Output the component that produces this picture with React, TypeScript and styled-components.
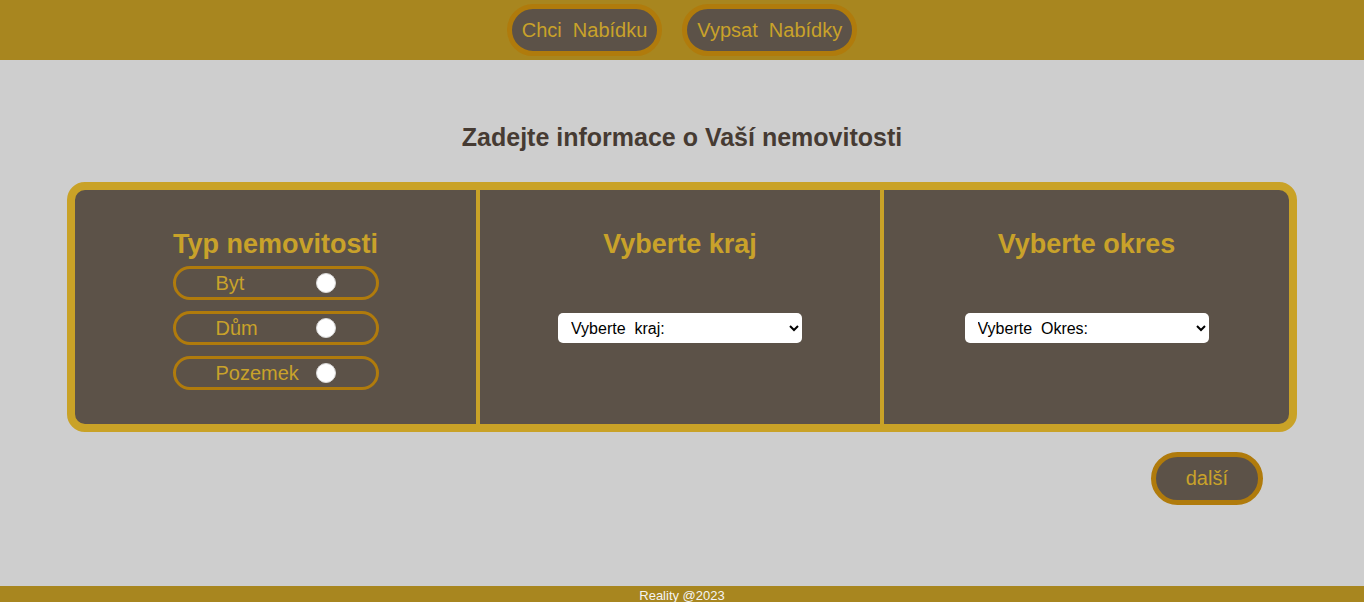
import React from "react";
import styled, { createGlobalStyle } from "styled-components";

const GlobalStyle = createGlobalStyle`
  html, body { margin: 0; padding: 0; }
  body {
    font-family: "Liberation Sans", Arial, sans-serif;
    background: #cecece;
  }
  #root {
    min-height: 100vh;
    display: flex;
    flex-direction: column;
  }
`;

const Header = styled.header`
  height: 60px;
  background: #a8861f;
  display: flex;
  justify-content: center;
  align-items: center;
  gap: 20px;
`;

const PillButton = styled.button<{ $tall?: boolean }>`
  box-sizing: border-box;
  height: ${(p) => (p.$tall ? "53px" : "52px")};
  padding: 0 ${(p) => (p.$tall ? "30px" : "10px")};
  border: 5px solid #b07b0c;
  border-radius: 30px;
  background: #5c5248;
  color: #c9a22a;
  font-family: "Liberation Sans", Arial, sans-serif;
  font-size: 20px;
  white-space: pre;
  cursor: pointer;
`;

const Main = styled.main`
  flex: 1;
  display: flex;
  flex-direction: column;
  align-items: center;
  padding-top: 63px;
`;

const Title = styled.h1`
  margin: 0 0 31px;
  font-size: 25px;
  line-height: 28px;
  font-weight: bold;
  color: #463b33;
`;

const Panel = styled.section`
  box-sizing: border-box;
  width: 1230px;
  height: 250px;
  border: 8px solid #c9a227;
  border-radius: 18px;
  overflow: hidden;
  background: #5c5248;
  display: flex;
`;

const Column = styled.div<{ $width?: number }>`
  box-sizing: border-box;
  flex: ${(p) => (p.$width ? `0 0 ${p.$width}px` : "1")};
  display: flex;
  flex-direction: column;
  align-items: center;
  padding-top: 39px;
  & + & {
    border-left: 4px solid #c9a227;
  }
`;

const ColumnTitle = styled.h2<{ $gap: number }>`
  margin: 0 0 ${(p) => p.$gap}px;
  font-size: 27px;
  line-height: 30px;
  font-weight: bold;
  color: #c9a22a;
`;

const RadioList = styled.div`
  display: flex;
  flex-direction: column;
  gap: 11px;
`;

const RadioPill = styled.label`
  box-sizing: border-box;
  height: 34px;
  padding: 0 40px;
  border: 3px solid #b07b0c;
  border-radius: 20px;
  display: flex;
  align-items: center;
  cursor: pointer;
`;

const RadioText = styled.span`
  width: 100px;
  font-size: 20px;
  color: #c9a22a;
`;

const RadioInput = styled.input`
  appearance: none;
  margin: 0;
  width: 20px;
  height: 20px;
  border-radius: 50%;
  background: #fff;
  border: 1px solid #d8d8d8;
  box-sizing: border-box;
`;

const Select = styled.select`
  box-sizing: border-box;
  width: 244px;
  height: 30px;
  border: none;
  border-radius: 5px;
  background: #fff;
  color: #000;
  padding: 0 9px;
  font-family: "Liberation Sans", Arial, sans-serif;
  font-size: 16px;
`;

const ActionRow = styled.div`
  box-sizing: border-box;
  width: 1230px;
  display: flex;
  justify-content: flex-end;
  padding-right: 34px;
  margin-top: 20px;
`;

const Footer = styled.footer`
  box-sizing: border-box;
  height: 16px;
  overflow: hidden;
  background: #a8861f;
  color: #f4f4f4;
  text-align: center;
  font-size: 13px;
  line-height: 15px;
  padding-top: 2px;
`;

const types = ["Byt", "Dům", "Pozemek"];

export default function App() {
  return (
    <>
      <GlobalStyle />
      <Header>
        <PillButton>{"Chci  Nabídku"}</PillButton>
        <PillButton>{"Vypsat  Nabídky"}</PillButton>
      </Header>
      <Main>
        <Title>Zadejte informace o Vaší nemovitosti</Title>
        <Panel>
          <Column $width={401}>
            <ColumnTitle $gap={7}>Typ nemovitosti</ColumnTitle>
            <RadioList>
              {types.map((t) => (
                <RadioPill key={t}>
                  <RadioText>{t}</RadioText>
                  <RadioInput type="radio" name="typ" />
                </RadioPill>
              ))}
            </RadioList>
          </Column>
          <Column $width={404}>
            <ColumnTitle $gap={54}>Vyberte kraj</ColumnTitle>
            <Select defaultValue="">
              <option value="">{"Vyberte\u00a0 kraj:"}</option>
            </Select>
          </Column>
          <Column>
            <ColumnTitle $gap={54}>Vyberte okres</ColumnTitle>
            <Select defaultValue="">
              <option value="">{"Vyberte\u00a0 Okres:"}</option>
            </Select>
          </Column>
        </Panel>
        <ActionRow>
          <PillButton $tall>další</PillButton>
        </ActionRow>
      </Main>
      <Footer>Reality @2023</Footer>
    </>
  );
}
